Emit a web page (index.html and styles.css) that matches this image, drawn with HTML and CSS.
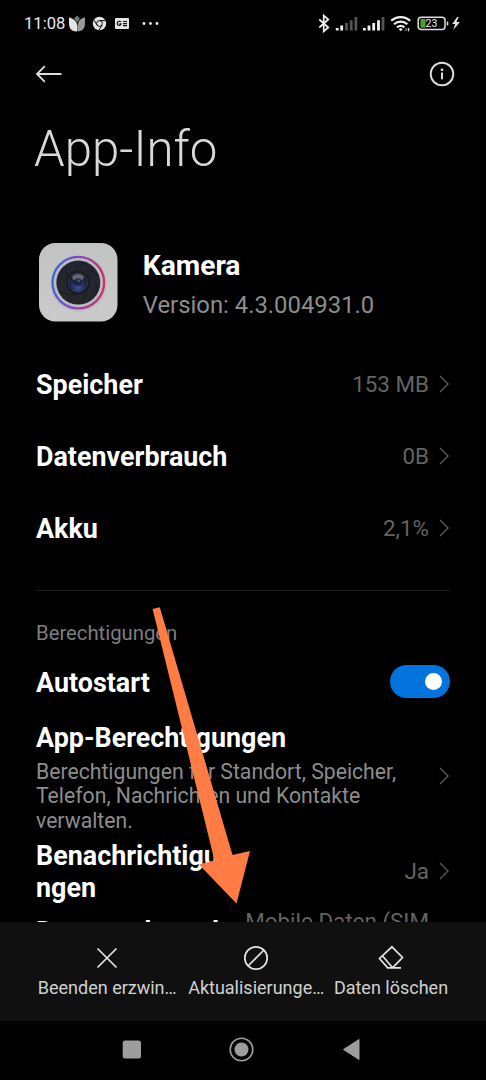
FILE: index.html
```html
<!DOCTYPE html>
<html lang="de">
<head>
<meta charset="utf-8">
<title>App-Info</title>
<link rel="stylesheet" href="styles.css">
</head>
<body>
<div class="phone">
  <header class="status">
    <span class="clock">11:08</span>
    <svg class="notif" width="94" height="20" viewBox="68 14 94 20">
      <path d="M74 18.500l3-3 3 3-3 4z" fill="#777"/>
      <path d="M69 17.500c4 .5 8 4 8.500 8.500.3 2 .2 4-.5 5.500-5 .3-8-3-8-8z" fill="#e4e4e4"/>
      <path d="M85 17.500c-4.500.5-7.500 4-7 8.500.2 2 .2 3.500-.5 5.500 5-.2 7.500-3 7.500-8z" fill="#999"/>
      <circle cx="99.500" cy="23.500" r="6.700" fill="#e4e4e4"/>
      <circle cx="99.500" cy="23.500" r="2.900" fill="none" stroke="#111" stroke-width="1"/>
      <path d="M99.500 20.600h6M97 25l-3.200-5.200M102 25l-3 5.200" stroke="#111" stroke-width="1"/>
      <rect x="115" y="18" width="14" height="11" rx="1" fill="#e4e4e4"/>
      <path d="M121 21.800c-1-1-3.800-.7-3.800 1.700s3.500 2.600 3.800.3h-1.700M123 21.500h4M123 23.600h4M123 25.700h4" fill="none" stroke="#111" stroke-width="1.200"/>
      <circle cx="144" cy="23.500" r="1.400" fill="#eee"/><circle cx="150.500" cy="23.500" r="1.400" fill="#eee"/><circle cx="157" cy="23.500" r="1.400" fill="#eee"/>
    </svg>
    <svg class="signals" width="144" height="20" viewBox="317 14 144 20">
      <path d="M319.300 19.500l9 8-4.600 4V15.500l4.600 4-9 8" fill="none" stroke="#f0f0f0" stroke-width="1.700"/>
      <path d="M337.200 30.500v-2.500M341.700 30.500v-5" stroke="#f0f0f0" stroke-width="2.800"/>
      <path d="M346.500 30.500v-7.500M351.200 30.500v-10.300M355.900 30.500V17" stroke="#555" stroke-width="2.800"/>
      <path d="M364.400 30.500v-2.500M369 30.500v-5M373.700 30.500v-7.500M378.500 30.500v-10.300" stroke="#f0f0f0" stroke-width="2.800"/>
      <path d="M383 30.500V17" stroke="#555" stroke-width="2.800"/>
      <path d="M391.200 20.800c5.500-5 13.500-5 19 0M394 24.300c4-3.600 9.400-3.600 13.400 0M397 27.400c2.300-2 5.100-2 7.400 0" fill="none" stroke="#f0f0f0" stroke-width="2.200"/>
      <path d="M398.700 29.300l2-1.200 2 1.200-2 2z" fill="#f0f0f0"/>
      <path d="M406 28v3" stroke="#777" stroke-width="1.400"/><path d="M408.500 28v3.300" stroke="#ddd" stroke-width="1.400"/>
      <rect x="418.200" y="17.200" width="26.800" height="12.400" rx="3" fill="none" stroke="#ddd" stroke-width="1.500"/>
      <rect x="420.500" y="19" width="5" height="8.700" fill="#45a52a"/>
      <path d="M447.500 21.500v4" stroke="#ddd" stroke-width="1.500"/>
      <text class="charge" x="425.600" y="27">23</text>
      <path d="M457.200 17l-5 7h3l-2 6 6.700-8h-3.500l2.300-5zM452 24.500h4.500M455 21.800h4.500" fill="#e4e4e4"/>
    </svg>
  </header>

  <nav class="toolbar">
    <svg width="28" height="20" viewBox="35 64 28 20"><path d="M61.500 74H37M44.800 66.200L37 74l7.800 7.800" fill="none" stroke="#ddd" stroke-width="1.800"/></svg>
    <svg width="26" height="26" viewBox="0 0 26 26"><circle cx="13" cy="13" r="11.300" fill="none" stroke="#ddd" stroke-width="1.900"/><circle cx="13" cy="8.800" r="1.400" fill="#ddd"/><path d="M13 11.500v6.800" stroke="#ddd" stroke-width="2"/></svg>
  </nav>

  <h1 class="title">App-Info</h1>

  <section class="app">
    <svg class="appicon" width="80" height="80" viewBox="38 242 80 80">
      <defs>
        <linearGradient id="ring" x1="0" y1=".4" x2="1" y2=".6"><stop offset="0" stop-color="#3c66d8"/><stop offset=".5" stop-color="#8d46ba"/><stop offset="1" stop-color="#d62d62"/></linearGradient>
        <linearGradient id="plate" x1="0" y1="0" x2="0" y2="1"><stop offset="0" stop-color="#c1c2c2"/><stop offset="1" stop-color="#cbcbcc"/></linearGradient>
        <radialGradient id="glass" cx=".5" cy=".75" r=".6"><stop offset="0" stop-color="#3b4f99"/><stop offset=".6" stop-color="#222b50"/><stop offset="1" stop-color="#1a1e2d"/></radialGradient>
      </defs>
      <rect x="39" y="243" width="78.500" height="78.500" rx="16.500" fill="url(#plate)"/>
      <circle cx="78.500" cy="284" r="28" fill="#a8a8ad" opacity=".3"/>
      <circle cx="78.300" cy="282.600" r="25.800" fill="#bbbcc5" stroke="url(#ring)" stroke-width="2.300"/>
      <circle cx="78.300" cy="282.600" r="22" fill="#24262e"/>
      <path d="M60 292c7 3 14 3 19 2M66 266c0 7 1 10 4 13M87 262c-7 2-11 5-13 10M99 276c-5-5-9-6-14-5M95 296c3-6 2-10 0-15M76 304c6-3 10-7 11-11" fill="none" stroke="#161820" stroke-width=".8"/>
      <circle cx="78" cy="282.500" r="11.500" fill="#15171f"/>
      <circle cx="78" cy="282.500" r="9.700" fill="url(#glass)" stroke="#3a3e51" stroke-width=".8"/>
      <ellipse cx="78" cy="277.500" rx="5.800" ry="3.500" fill="#aaacb5" opacity=".5"/>
      <circle cx="78" cy="282" r="4" fill="#171c35" opacity=".65"/><circle cx="79" cy="281" r=".7" fill="#99a"/>
    </svg>
    <div class="appmeta"><div class="appname">Kamera</div><div class="version">Version: 4.3.004931.0</div></div>
  </section>

  <section class="usage">
    <div class="row"><span class="name">Speicher</span><span class="value">153 MB</span><svg class="chev" viewBox="0 0 10 18"><path d="M1 1l8 8-8 8"/></svg></div>
    <div class="row"><span class="name">Datenverbrauch</span><span class="value">0B</span><svg class="chev" viewBox="0 0 10 18"><path d="M1 1l8 8-8 8"/></svg></div>
    <div class="row"><span class="name">Akku</span><span class="value">2,1%</span><svg class="chev" viewBox="0 0 10 18"><path d="M1 1l8 8-8 8"/></svg></div>
  </section>

  <section class="perms">
    <h2 class="caption">Berechtigungen</h2>
    <div class="row auto"><span class="name">Autostart</span><span class="toggle"><span class="knob"></span></span></div>
    <div class="row detail">
      <div class="grow"><div class="name">App-Berechtigungen</div><p class="desc">Berechtigungen für Standort, Speicher,<br>Telefon, Nachrichten und Kontakte<br>verwalten.</p></div>
      <svg class="chev" viewBox="0 0 10 18"><path d="M1 1l8 8-8 8"/></svg>
    </div>
    <div class="row notify"><span class="name">Benachrichtigu<br>ngen</span><span class="value">Ja</span><svg class="chev" viewBox="0 0 10 18"><path d="M1 1l8 8-8 8"/></svg></div>
    <div class="row cut"><span class="name">Datenverbrauch</span><span class="value">Mobile Daten (SIM</span></div>
  </section>

  <footer class="actions">
    <div class="action"><svg width="26" height="26" viewBox="0 0 26 26"><path d="M3.500 3.500l19 19M22.500 3.500l-19 19"/></svg><span class="label">Beenden erzwin…</span></div>
    <div class="action"><svg width="26" height="26" viewBox="0 0 26 26"><circle cx="13" cy="13" r="11.200"/><path d="M5 21L21 5"/></svg><span class="label">Aktualisierunge…</span></div>
    <div class="action"><svg width="26" height="26" viewBox="0 0 26 26"><path d="M14 1.800L24.500 12.500 14.500 22.800H9.700L1.500 13.500zM4.600 11l10 11.800M9.700 22.800H23"/></svg><span class="label">Daten löschen</span></div>
  </footer>

  <nav class="system">
    <svg width="486" height="59" viewBox="0 1021 486 59" fill="#9d9d9d">
      <rect x="122.700" y="1040.500" width="18.300" height="18" rx="2.500"/>
      <circle cx="241.500" cy="1049.500" r="11.300" fill="none" stroke="#9d9d9d" stroke-width="1.600"/><circle cx="241.500" cy="1049.500" r="7"/>
      <path d="M343.500 1049.500L359 1039.500v20z" stroke="#9d9d9d" stroke-width="1" stroke-linejoin="round"/>
    </svg>
  </nav>

  <svg class="pointer" width="110" height="310" viewBox="146 600 110 310"><path d="M152.600 609L159.800 607.300 232.500 855 250 851 236.500 903.500 199 864.500 214.500 860.500Z" fill="#ff7c45"/></svg>
</div>
</body>
</html>
```
FILE: styles.css
```css
* { box-sizing: border-box; }
body { margin: 0; background: #000; font-family: Roboto, sans-serif; }
.phone { position: relative; width: 486px; height: 1080px; overflow: hidden; background: #000; color: #fff; display: flex; flex-direction: column; }
.phone > * { flex-shrink: 0; }
svg { display: block; }

.status { height: 48px; padding: 14px 25px 0 24px; display: flex; line-height: 20px; }
.clock { width: 44px; font-size: 16.6px; color: #e8e8e8; white-space: nowrap; }
.signals { margin-left: auto; }
.charge { font-size: 10.5px; font-weight: 400; fill: #eee; }

.toolbar { height: 52px; padding: 0 31px 0 35px; display: flex; align-items: center; justify-content: space-between; }
.title { margin: 24px 0 0 34px; font-size: 49.2px; line-height: 50px; font-weight: 300; color: #d8d8d8; }

.app { height: 80px; margin-top: 68px; padding-left: 38px; display: flex; }
.appmeta { margin-left: 24.8px; padding-top: 5px; }
.appname { font-size: 28.2px; line-height: 38px; font-weight: 700; }
.version { font-size: 23.85px; line-height: 40px; color: #8d8d8d; }

.usage { margin: 26px 36px 0; height: 243px; border-bottom: 1px solid #1c1c1c; }
.row { display: flex; align-items: center; height: 72px; }
.name { padding-top: 2px; font-size: 26.9px; line-height: 32px; font-weight: 700; color: #fff; white-space: nowrap; }
.value { margin-left: auto; font-size: 22.4px; color: #646464; white-space: nowrap; }
.chev { width: 10px; height: 18px; margin: 0 1px 0 10px; flex: none; fill: none; stroke: #5c5c5c; stroke-width: 1.3; }

.perms { height: 331px; margin: 0 36px; overflow: hidden; }
.caption { margin: 31px 0 0; font-size: 20.3px; line-height: 22px; font-weight: 400; color: #7d7d7d; }
.auto { height: 34px; margin-top: 21px; justify-content: space-between; }
.toggle { width: 60px; height: 33px; margin-top: -1px; padding: 8px; border-radius: 17px; background: #0374dd; display: flex; justify-content: flex-end; }
.knob { width: 17px; height: 17px; border-radius: 50%; background: #fff; }
.detail { height: 113px; margin-top: 22px; }
.detail .name { padding-top: 1px; }
.detail .chev { margin-bottom: 4px; }
.desc { margin: 5.5px 0 0; font-size: 21.2px; line-height: 24.7px; color: #8d8d8d; white-space: nowrap; }
.grow { flex: 1; }
.notify { height: 64px; margin-top: 5px; }
.notify .value, .notify .chev { margin-bottom: 1px; }
.cut { height: 34px; margin-top: 12px; }
.cut .name { padding-top: 0; margin-top: -1px; }
.cut .value { margin-right: 21px; margin-top: -22px; }

.actions { height: 99px; background: #101010; padding: 23px 31px 0; display: grid; grid-template-columns: 152.4px 145.6px 124px; }
.action { display: flex; flex-direction: column; align-items: center; }
.action svg { fill: none; stroke: #e4e4e4; stroke-width: 1.7; }
.label { margin-top: 6px; font-size: 18px; line-height: 22px; color: #d0d0d0; white-space: nowrap; }
.system { height: 59px; }
.pointer { position: absolute; left: 146px; top: 600px; }
```
